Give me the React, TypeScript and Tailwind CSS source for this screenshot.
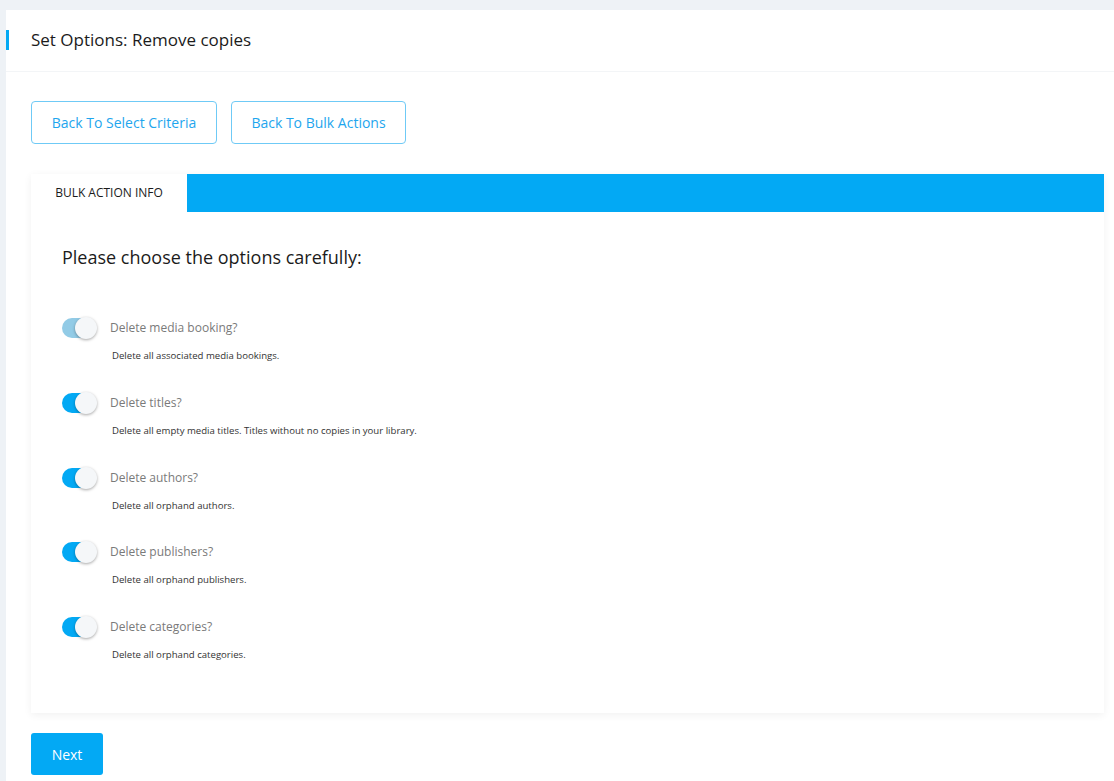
import React from "react";

const options = [
  { label: "Delete media booking?", desc: "Delete all associated media bookings.", disabled: true },
  { label: "Delete titles?", desc: "Delete all empty media titles. Titles without no copies in your library.", disabled: false },
  { label: "Delete authors?", desc: "Delete all orphand authors.", disabled: false },
  { label: "Delete publishers?", desc: "Delete all orphand publishers.", disabled: false },
  { label: "Delete categories?", desc: "Delete all orphand categories.", disabled: false },
];

function Toggle({ disabled }: { disabled: boolean }) {
  return (
    <div className={`relative w-[34px] h-[20px] rounded-full ${disabled ? "bg-[#92cbe6]" : "bg-[#03a9f4]"}`}>
      <div className="absolute right-[-1px] top-[-1px] w-[22px] h-[22px] rounded-full bg-[#f5f7f9] shadow-[0_1px_3px_rgba(0,0,0,0.35)]" />
    </div>
  );
}

export default function App() {
  return (
    <div className="w-[1114px] h-[781px] bg-[#eef2f6] pt-[10px] pl-[6px] overflow-hidden" style={{ fontFamily: '"Open Sans", "Noto Sans", sans-serif' }}>
      <div className="bg-white h-full">
        <div className="h-[62px] border-b border-[#f3f5f7] flex items-center pb-[2px]">
          <div className="w-[3px] h-[20px] bg-[#03a9f4] mr-[22px]" />
          <span className="text-[17px] text-[#1b1b1b]">Set Options: Remove copies</span>
        </div>
        <div className="pl-[25px] pr-[10px]">
          <div className="flex gap-[14px] mt-[29px]">
            <button className="h-[43px] w-[186px] border border-[#6fcaf6] rounded-[4px] text-[14px] text-[#1ea6ee] bg-white">Back To Select Criteria</button>
            <button className="h-[43px] w-[175px] border border-[#6fcaf6] rounded-[4px] text-[14px] text-[#1ea6ee] bg-white">Back To Bulk Actions</button>
          </div>
          <div className="mt-[30px] shadow-[0_2px_8px_rgba(0,0,0,0.06)]">
            <div className="flex h-[38px] bg-[#03a9f4]">
              <div className="w-[156px] bg-white flex items-center justify-center text-[12px] text-[#1b1b1b]">BULK ACTION INFO</div>
            </div>
            <div className="bg-white h-[501px] pl-[31px] pt-[33px]">
              <div className="text-[18px] text-[#1b1b1b] leading-[24px]">Please choose the options carefully:</div>
              <div className="mt-[49px] flex flex-col gap-[31.75px]">
                {options.map((o) => (
                  <div key={o.label}>
                    <div className="flex items-center h-[20px]">
                      <Toggle disabled={o.disabled} />
                      <span className="ml-[14px] text-[12px] text-[#7a7a7a]">{o.label}</span>
                    </div>
                    <div className="mt-[12px] ml-[50px] text-[9.6px] text-[#333] leading-[11px]">{o.desc}</div>
                  </div>
                ))}
              </div>
            </div>
          </div>
          <button className="mt-[20px] h-[42px] w-[72px] rounded-[3px] bg-[#03a9f4] text-white text-[14px]">Next</button>
        </div>
      </div>
    </div>
  );
}
